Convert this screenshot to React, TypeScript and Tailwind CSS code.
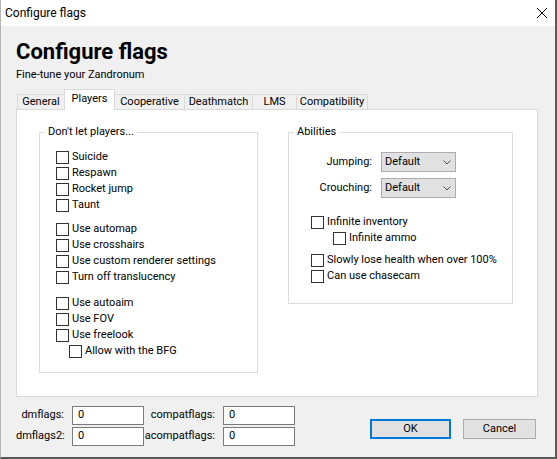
import React from "react";

// Small win32-style building blocks
const Check = ({ label, indent = 0 }: { label: string; indent?: number }) => (
  <div className="flex items-center h-[16px]" style={{ paddingLeft: indent }}>
    <span className="w-[13px] h-[13px] shrink-0 border border-[#333333] bg-white" />
    <span className="ml-[3px] whitespace-nowrap">{label}</span>
  </div>
);

const Combo = ({ value }: { value: string }) => (
  <div className="w-[75px] h-[20px] flex items-center justify-between pl-[3px] pr-[4px] bg-[#e1e1e1] border border-[#adadad]">
    <span>{value}</span>
    <svg width="8" height="5" viewBox="0 0 8 5">
      <polyline points="0.5,0.5 4,4 7.5,0.5" fill="none" stroke="#505050" strokeWidth="1" />
    </svg>
  </div>
);

const Field = ({ value }: { value: string }) => (
  <div className="ml-[8px] w-[72px] h-[19px] flex items-center px-[5px] bg-white border border-[#7a7a7a]">
    {value}
  </div>
);

const tabs = [
  { name: "General", w: "w-[48px]" },
  { name: "Players", w: "w-[51px]" },
  { name: "Cooperative", w: "w-[71px]" },
  { name: "Deathmatch", w: "w-[69px]" },
  { name: "LMS", w: "w-[45px]" },
  { name: "Compatibility", w: "w-[72px]" },
];

export default function App() {
  return (
    <div className="w-[557px] h-[459px] flex flex-col bg-[#f0f0f0] text-[11px] text-black font-['Roboto',sans-serif] border-l border-l-[#b4b4b4] border-r-2 border-r-[#5a5a5a] border-b-2 border-b-[#5a5a5a] overflow-hidden">
      {/* Title bar */}
      <div className="h-[26px] shrink-0 flex items-center justify-between bg-white pl-[4px] pr-[8px]">
        <span className="text-[12px]">Configure flags</span>
        <svg width="10" height="10" viewBox="0 0 10 10">
          <line x1="0" y1="0" x2="10" y2="10" stroke="#000" strokeWidth="1" />
          <line x1="10" y1="0" x2="0" y2="10" stroke="#000" strokeWidth="1" />
        </svg>
      </div>

      <div className="flex flex-col px-[15px] pt-[12px]">
        <h1 className="text-[22px] font-bold leading-[28px]">Configure flags</h1>
        <p className="mt-[1px] leading-[16px]">Fine-tune your Zandronum</p>

        {/* Tabs */}
        <div className="mt-[6px] flex items-end pl-[1px]">
          {tabs.map((t, i) => {
            const active = t.name === "Players";
            return (
              <div
                key={t.name}
                className={
                  active
                    ? `${t.w} h-[21px] -mb-px relative z-10 flex items-center justify-center bg-white border-t border-x border-[#d9d9d9] -ml-px pb-[2px]`
                    : `${t.w} h-[15px] flex items-center justify-center bg-[#f0f0f0] border-t border-x border-[#d9d9d9] ${i > 0 ? "-ml-px" : ""}`
                }
              >
                {t.name}
              </div>
            );
          })}
        </div>

        {/* Tab pane */}
        <div className="w-[522px] h-[288px] bg-white border border-[#d9d9d9] flex items-start pt-[14px] pl-[22px]">
          <fieldset className="w-[219px] h-[249px] border border-[#dcdcdc]">
            <legend className="ml-[5px] px-[3px] leading-[16px]">Don't let players...</legend>
            <div className="flex flex-col pt-[9px] pl-[16px]">
              <Check label="Suicide" />
              <Check label="Respawn" />
              <Check label="Rocket jump" />
              <Check label="Taunt" />
              <div className="mt-[8px]" />
              <Check label="Use automap" />
              <Check label="Use crosshairs" />
              <Check label="Use custom renderer settings" />
              <Check label="Turn off translucency" />
              <div className="mt-[10px]" />
              <Check label="Use autoaim" />
              <Check label="Use FOV" />
              <Check label="Use freelook" />
              <Check label="Allow with the BFG" indent={13} />
            </div>
          </fieldset>

          <fieldset className="ml-[30px] w-[225px] h-[180px] border border-[#dcdcdc]">
            <legend className="ml-[5px] px-[3px] leading-[16px]">Abilities</legend>
            <div className="flex flex-col pt-[12px]">
              <div className="flex items-center">
                <span className="w-[83px] text-right">Jumping:</span>
                <div className="ml-[9px]">
                  <Combo value="Default" />
                </div>
              </div>
              <div className="flex items-center mt-[6px]">
                <span className="w-[83px] text-right">Crouching:</span>
                <div className="ml-[9px]">
                  <Combo value="Default" />
                </div>
              </div>
              <div className="mt-[16px]" />
              <Check label="Infinite inventory" indent={22} />
              <Check label="Infinite ammo" indent={44} />
              <div className="mt-[6px]" />
              <Check label="Slowly lose health when over 100%" indent={22} />
              <Check label="Can use chasecam" indent={22} />
            </div>
          </fieldset>
        </div>

        {/* Raw flag fields and buttons */}
        <div className="mt-[9px] flex items-start">
          <div className="grid grid-cols-[48px_80px_71px_80px] gap-y-[2px] items-center">
            <span className="text-right">dmflags:</span>
            <Field value="0" />
            <span className="text-right">compatflags:</span>
            <Field value="0" />
            <span className="text-right">dmflags2:</span>
            <Field value="0" />
            <span className="text-right">acompatflags:</span>
            <Field value="0" />
          </div>
          <div className="ml-[75px] mt-[13px] flex gap-[12px]">
            <button className="w-[81px] h-[20px] flex items-center justify-center bg-[#e1e1e1] border-2 border-[#0078d7]">
              OK
            </button>
            <button className="w-[73px] h-[20px] flex items-center justify-center bg-[#e1e1e1] border border-[#adadad]">
              Cancel
            </button>
          </div>
        </div>
      </div>
    </div>
  );
}
